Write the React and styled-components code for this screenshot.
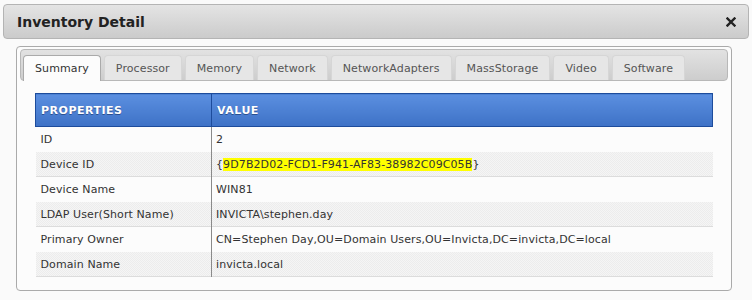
import styled, { createGlobalStyle } from 'styled-components';

const GlobalStyle = createGlobalStyle`
  body {
    margin: 0;
    background: #fafafa;
    font-family: "DejaVu Sans", Verdana, sans-serif;
    color: #333;
  }
`;

const tabs = [
  'Summary',
  'Processor',
  'Memory',
  'Network',
  'NetworkAdapters',
  'MassStorage',
  'Video',
  'Software',
];

const rows = [
  { name: 'ID', value: '2' },
  { name: 'Device ID', value: '9D7B2D02-FCD1-F941-AF83-38982C09C05B', guid: true },
  { name: 'Device Name', value: 'WIN81' },
  { name: 'LDAP User(Short Name)', value: 'INVICTA\\stephen.day' },
  { name: 'Primary Owner', value: 'CN=Stephen Day,OU=Domain Users,OU=Invicta,DC=invicta,DC=local' },
  { name: 'Domain Name', value: 'invicta.local' },
];

function CloseIcon() {
  return (
    <svg width="10" height="10" viewBox="0 0 10 10">
      <path d="M1.5 1.5 L8.5 8.5 M8.5 1.5 L1.5 8.5" stroke="#222" strokeWidth="2.4" strokeLinecap="square" />
    </svg>
  );
}

function App() {
  return (
    <>
      <GlobalStyle />
      <S.Dialog>
        <S.TitleBar>
          <S.Title>Inventory Detail</S.Title>
          <S.Close>
            <CloseIcon />
          </S.Close>
        </S.TitleBar>
        <S.Panel>
          <S.TabBar>
            {tabs.map((t, i) => (
              <S.Tab key={t} $active={i === 0}>
                {t}
              </S.Tab>
            ))}
          </S.TabBar>
          <S.Table>
            <thead>
              <tr>
                <S.HeadCell $first>PROPERTIES</S.HeadCell>
                <S.HeadCell>VALUE</S.HeadCell>
              </tr>
            </thead>
            <tbody>
              {rows.map((r, i) => (
                <S.Row key={r.name} $striped={i % 2 === 1}>
                  <S.NameCell>{r.name}</S.NameCell>
                  <S.ValueCell>
                    {r.guid ? (
                      <>
                        {'{'}
                        <S.Mark>{r.value}</S.Mark>
                        {'}'}
                      </>
                    ) : (
                      r.value
                    )}
                  </S.ValueCell>
                </S.Row>
              ))}
            </tbody>
          </S.Table>
        </S.Panel>
      </S.Dialog>
    </>
  );
}
export default App;

const Dialog = styled.div`
  padding: 4px 3px 0 3px;
`;

const TitleBar = styled.div`
  height: 33px;
  border: 1px solid #b4b4b4;
  border-radius: 4px;
  background: linear-gradient(#e4e4e4, #cbcbcb);
  display: flex;
  align-items: center;
  justify-content: space-between;
  padding: 0 12px 0 13px;
`;

const Title = styled.h1`
  margin: 0;
  font-size: 14px;
  font-weight: bold;
  color: #222;
`;

const Close = styled.span`
  display: flex;
  align-items: center;
`;

const Panel = styled.div`
  margin: 7px 17px 0 13px;
  height: 239px;
  border: 1px solid #aaa;
  border-radius: 4px;
  background: #fcfcfc;
  padding: 2px 3px;
`;

const TabBar = styled.div`
  height: 26px;
  border: 1px solid #b8b8b8;
  border-radius: 4px;
  background: linear-gradient(#e2e2e2, #cdcdcd);
  padding: 4px 0 0 2px;
  display: flex;
  align-items: flex-end;
  gap: 3px;
`;

const Tab = styled.div`
  height: ${({ $active }) => ($active ? '26px' : '25px')};
  box-sizing: border-box;
  padding: 0 11px 0 11px;
  display: flex;
  align-items: center;
  font-size: 11px;
  letter-spacing: 0.1px;
  color: ${({ $active }) => ($active ? '#333' : '#555')};
  background: ${({ $active }) => ($active ? '#fcfcfc' : '#e6e6e6')};
  border: 1px solid ${({ $active }) => ($active ? '#aaa' : '#d6d6d6')};
  border-bottom: none;
  border-radius: 4px 4px 0 0;
  margin-bottom: ${({ $active }) => ($active ? '-1px' : '0')};
`;

const Table = styled.table`
  margin: 12px 0 0 15px;
  width: 678px;
  border-collapse: collapse;
  font-size: 11px;
  letter-spacing: 0.1px;
`;

const HeadCell = styled.th`
  height: 32px;
  padding: 0 5px;
  text-align: left;
  font-size: 11px;
  font-weight: bold;
  letter-spacing: 0.5px;
  color: #fff;
  text-shadow: 0 1px 0 #2a4f8f;
  background: linear-gradient(#5b8fe0, #3e72c6);
  border: 1px solid #1d4c9c;
  width: ${({ $first }) => ($first ? '165px' : 'auto')};
`;

const Row = styled.tr`
  height: 25px;
  background: ${({ $striped }) =>
    $striped ? 'repeating-conic-gradient(#ececec 0 25%, #f5f5f5 0 50%) 0 0 / 2px 2px' : 'transparent'};
  border-top: 1px solid ${({ $striped }) => ($striped ? '#dcdcdc' : 'transparent')};
  border-bottom: 1px solid ${({ $striped }) => ($striped ? '#dcdcdc' : 'transparent')};
`;

const NameCell = styled.td`
  padding: 0 5px;
  border-right: 1px solid #8a8a8a;
`;

const ValueCell = styled.td`
  padding: 0 4px;
`;

const Mark = styled.span`
  background: #ffff00;
`;

const S = {
  Dialog,
  TitleBar,
  Title,
  Close,
  Panel,
  TabBar,
  Tab,
  Table,
  HeadCell,
  Row,
  NameCell,
  ValueCell,
  Mark,
};
